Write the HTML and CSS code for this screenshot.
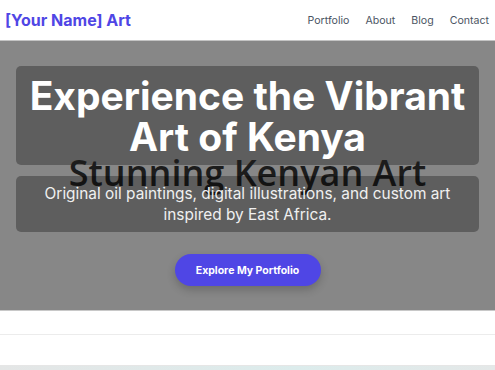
FILE: index.html
```html
<!DOCTYPE html>
<html lang="en">
<head>
<meta charset="utf-8">
<title>[Your Name] Art</title>
<link rel="stylesheet" href="styles.css">
</head>
<body>
<header class="site-header">
  <a class="logo" href="#">[Your Name] Art</a>
  <nav class="nav">
    <a href="#">Portfolio</a>
    <a href="#">About</a>
    <a href="#">Blog</a>
    <a href="#">Contact</a>
  </nav>
</header>
<section class="hero">
  <div class="hero-title-box">
    <h1 class="hero-title">Experience the Vibrant Art of Kenya</h1>
  </div>
  <h2 class="hero-alt">Stunning Kenyan Art</h2>
  <div class="hero-sub-box">
    <p class="hero-sub">Original oil paintings, digital illustrations, and custom art inspired by East Africa.</p>
  </div>
  <a class="cta" href="#">Explore My Portfolio</a>
</section>
<section class="strip"></section>
<section class="next"></section>
<div class="next-bg"></div>
</body>
</html>
```
FILE: styles.css
```css
* { box-sizing: border-box; }
html, body { margin: 0; padding: 0; }
body {
  font-family: Inter, "Noto Sans", sans-serif;
  background: #fff;
  overflow: hidden;
  height: 370px;
}
a { text-decoration: none; }

.site-header {
  height: 41px;
  display: flex;
  align-items: center;
  justify-content: space-between;
  padding: 0 6px 0 5px;
  background: #fff;
  border-bottom: 1px solid #c4c4c4;
}
.logo {
  color: #4f46e5;
  font-weight: 700;
  font-size: 16px;
}
.nav {
  display: flex;
  gap: 16px;
}
.nav a {
  color: #4b5563;
  font-size: 10.6px;
}

.hero {
  background: #878787;
  height: 269px;
  padding: 25px 16px 0;
  display: flex;
  flex-direction: column;
  align-items: center;
}
.hero-title-box {
  width: 100%;
  background: rgba(0,0,0,0.3);
  border-radius: 5px;
  padding: 9px 4px 8px;
}
.hero-title {
  margin: 0;
  color: #fff;
  font-weight: 700;
  font-size: 39px;
  line-height: 41px;
  text-align: center;
}
.hero-alt {
  margin: -12px 0 -17px;
  font-family: "Open Sans", sans-serif;
  font-weight: 600;
  font-size: 36px;
  line-height: 40px;
  color: #1c1c1c;
  text-align: center;
}
.hero-sub-box {
  width: 100%;
  background: rgba(0,0,0,0.3);
  border-radius: 5px;
  padding: 7px 8px;
  position: relative;
}
.hero-sub {
  margin: 0;
  color: #f0f0f0;
  font-size: 15.4px;
  line-height: 21px;
  text-align: center;
}
.cta {
  margin-top: 22px;
  display: flex;
  align-items: center;
  justify-content: center;
  width: 146px;
  height: 32px;
  border-radius: 16px;
  background: #4f46e5;
  color: #fff;
  font-weight: 700;
  font-size: 10.5px;
  box-shadow: 0 4px 8px rgba(0,0,0,0.2);
}
.strip {
  height: 25px;
  border-top: 1px solid #c8c8c8;
  border-bottom: 1px solid #ececec;
}
.next {
  height: 31px;
  background: #fff;
  border-bottom: 1px solid #e6e6e6;
}
.next-bg {
  height: 10px;
  background: linear-gradient(90deg, #e4e6e6, #dcecec 60%, #e4e8e8);
}
```
